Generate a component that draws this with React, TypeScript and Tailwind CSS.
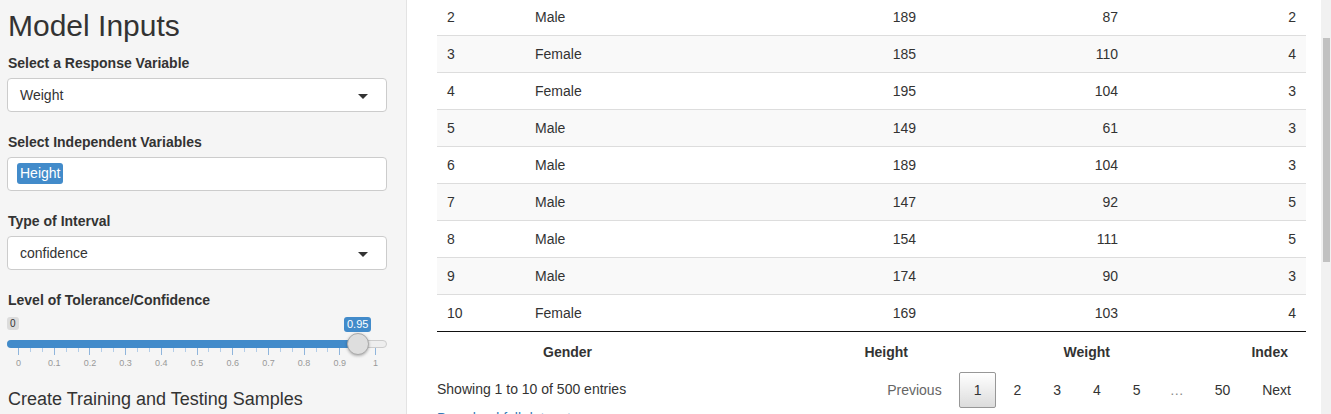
import React from "react";

const rows: [string, string, string, string, string][] = [
  ["2", "Male", "189", "87", "2"],
  ["3", "Female", "185", "110", "4"],
  ["4", "Female", "195", "104", "3"],
  ["5", "Male", "149", "61", "3"],
  ["6", "Male", "189", "104", "3"],
  ["7", "Male", "147", "92", "5"],
  ["8", "Male", "154", "111", "5"],
  ["9", "Male", "174", "90", "3"],
  ["10", "Female", "169", "103", "4"],
];

function Caret() {
  return (
    <span className="absolute right-[18px] top-[15px] h-0 w-0 border-l-[5px] border-r-[5px] border-t-[5px] border-l-transparent border-r-transparent border-t-[#333]" />
  );
}

function Label({ children }: { children: React.ReactNode }) {
  return <div className="mb-[5px] text-[14px] font-bold leading-[20px] text-[#333]">{children}</div>;
}

function SelectBox({ value }: { value: string }) {
  return (
    <div className="relative h-[34px] rounded-[4px] border border-[#ccc] bg-white pl-[12px] text-[14px] leading-[32px] text-[#333]">
      {value}
      <Caret />
    </div>
  );
}

function Slider() {
  const majors = Array.from({ length: 11 }, (_, i) => i);
  const start = 11;
  const step = 35.7;
  const minors: number[] = [];
  for (let i = 0; i < 10; i++) {
    minors.push(start + i * step + step / 3);
    minors.push(start + i * step + (2 * step) / 3);
  }
  const handle = 351;
  return (
    <div className="relative h-[55px] w-[380px]">
      <div className="absolute left-0 top-[2px] h-[13px] rounded-[3px] bg-[#dcdcdc] px-[3px] text-[10px] leading-[13px] text-[#333]">0</div>
      <div className="absolute left-[337px] top-[2px] h-[15px] rounded-[3px] bg-[#428bca] px-[3px] text-[11px] leading-[15px] text-white">0.95</div>
      <div className="absolute left-0 top-[25px] h-[8px] w-[380px] rounded-full border border-[#ccc] bg-[#eee]" />
      <div className="absolute left-0 top-[25px] h-[8px] rounded-l-full bg-[#428bca]" style={{ width: handle }} />
      {majors.map((i) => (
        <div key={"M" + i}>
          <div className="absolute top-[33px] h-[7px] w-px bg-[#8fb5dc]" style={{ left: start + i * step }} />
          <div
            className="absolute top-[43px] w-[30px] -translate-x-1/2 text-center text-[9px] leading-[11px] text-[#999]"
            style={{ left: start + i * step + 0.5 }}
          >
            {i === 0 ? "0" : i === 10 ? "1" : "0." + i}
          </div>
        </div>
      ))}
      {minors.map((x, i) => (
        <div key={"m" + i} className="absolute top-[33px] h-[4px] w-px bg-[#b3cde8]" style={{ left: Math.round(x) }} />
      ))}
      <div className="absolute left-[340px] top-[18px] h-[22px] w-[22px] rounded-full border border-[#aaa] bg-[#dedede] shadow-[0_1px_3px_rgba(0,0,0,0.3)]" />
    </div>
  );
}

const gridCols = "grid grid-cols-[88px_200px_201px_202px_178px]";

export default function App() {
  return (
    <div className="flex h-[414px] w-full overflow-hidden bg-white font-['Liberation_Sans',Arial,sans-serif] text-[#333]">
      {/* Sidebar */}
      <div className="w-[407px] shrink-0 border-r border-[#e3e3e3] bg-[#f5f5f5] pl-[7px] pt-[9px]">
        <div className="w-[380px]">
          <h2 className="pl-[1px] text-[30px] font-normal leading-[33px] text-[#333]">Model Inputs</h2>
          <div className="mt-[11px] pl-[1px]">
            <Label>Select a Response Variable</Label>
          </div>
          <SelectBox value="Weight" />
          <div className="mt-[20px] pl-[1px]">
            <Label>Select Independent Variables</Label>
          </div>
          <div className="flex h-[34px] items-start rounded-[4px] border border-[#ccc] bg-white pl-[9px] pt-[5px]">
            <span className="h-[21px] rounded-[3px] bg-[#428bca] px-[3px] text-[14px] leading-[21px] text-white">Height</span>
          </div>
          <div className="mt-[20px] pl-[1px]">
            <Label>Type of Interval</Label>
          </div>
          <SelectBox value="confidence" />
          <div className="mt-[20px] pl-[1px]">
            <Label>Level of Tolerance/Confidence</Label>
          </div>
          <Slider />
          <h4 className="mt-[19px] pl-[1px] text-[18px] font-normal leading-[20px] text-[#333]">
            Create Training and Testing Samples
          </h4>
        </div>
      </div>

      {/* Main */}
      <div className="min-w-0 flex-1 pl-[30px] pr-[15px]">
        <div className="-mt-[2px] w-[869px] text-[14px] leading-[20px] text-[#333]">
          {rows.map((r, i) => (
            <div key={r[0]} className={`${gridCols} border-t border-[#ddd] ${i % 2 === 1 ? "bg-[#f9f9f9]" : "bg-white"}`}>
              <div className="px-[10px] py-[8px]">{r[0]}</div>
              <div className="px-[10px] py-[8px]">{r[1]}</div>
              <div className="px-[10px] py-[8px] text-right">{r[2]}</div>
              <div className="px-[10px] py-[8px] text-right">{r[3]}</div>
              <div className="px-[10px] py-[8px] text-right">{r[4]}</div>
            </div>
          ))}
          <div className={`${gridCols} border-t border-[#111] font-bold`}>
            <div className="pb-[6px] pl-[18px] pr-[18px] pt-[10px]"></div>
            <div className="pb-[6px] pl-[18px] pr-[18px] pt-[10px]">Gender</div>
            <div className="pb-[6px] pl-[18px] pr-[18px] pt-[10px] text-right">Height</div>
            <div className="pb-[6px] pl-[18px] pr-[18px] pt-[10px] text-right">Weight</div>
            <div className="pb-[6px] pl-[18px] pr-[18px] pt-[10px] text-right">Index</div>
          </div>
          <div className="flex h-[40px] items-start justify-between">
            <div className="pt-[11px]">Showing 1 to 10 of 500 entries</div>
            <div className="flex items-center pt-[4px]">
              <span className="ml-[2px] border border-transparent px-[14px] py-[7px] text-[#666]">Previous</span>
              <span className="ml-[2px] rounded-[2px] border border-[#979797] bg-gradient-to-b from-white to-[#dcdcdc] px-[14px] py-[7px] text-[#333]">1</span>
              <span className="ml-[2px] border border-transparent px-[14px] py-[7px]">2</span>
              <span className="ml-[2px] border border-transparent px-[14px] py-[7px]">3</span>
              <span className="ml-[2px] border border-transparent px-[14px] py-[7px]">4</span>
              <span className="ml-[2px] border border-transparent px-[14px] py-[7px]">5</span>
              <span className="px-[14px] text-[#888]">…</span>
              <span className="ml-[2px] border border-transparent px-[14px] py-[7px]">50</span>
              <span className="ml-[2px] border border-transparent px-[14px] py-[7px]">Next</span>
            </div>
          </div>
          <div className="text-[#337ab7]">Download full dataset</div>
        </div>
      </div>

      {/* Scrollbar */}
      <div className="w-[10px] shrink-0 bg-[#f1f1f1] pl-[2px] pt-[38px]">
        <div className="h-[224px] w-[7px] bg-[#c1c1c1]" />
      </div>
    </div>
  );
}
